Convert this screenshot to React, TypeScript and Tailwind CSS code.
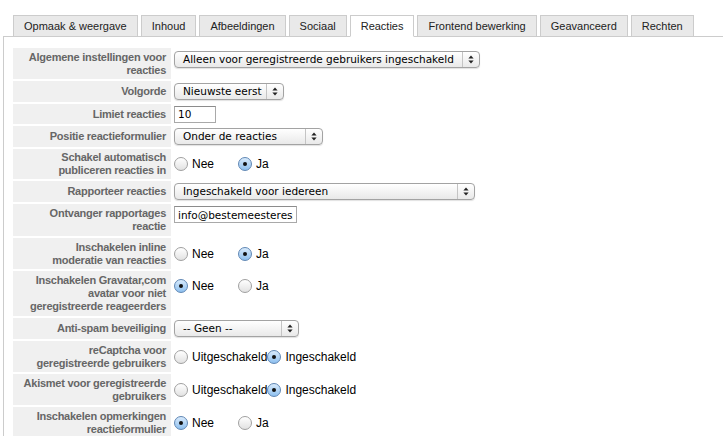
import React from "react";

const tabs = [
    "Opmaak & weergave",
    "Inhoud",
    "Afbeeldingen",
    "Sociaal",
    "Reacties",
    "Frontend bewerking",
    "Geavanceerd",
    "Rechten",
];

const Arrows = () => (
    <svg width="6" height="9" viewBox="0 0 6 9" className="block">
        <path d="M3 0.5 L5.6 3.6 L0.4 3.6 Z" fill="#222" />
        <path d="M3 8.5 L5.6 5.4 L0.4 5.4 Z" fill="#222" />
    </svg>
);

const Select = ({ value, width }: { value: string; width: string }) => (
    <div
        className={`${width} h-[17px] flex items-center rounded-[4px] border border-[#a3a3a3] bg-gradient-to-b from-white to-[#e9e9e9] shadow-[0_1px_1px_rgba(0,0,0,0.12)] font-['DejaVu_Sans',sans-serif] text-[10.5px] text-black`}
    >
        <span className="flex-1 pl-[8px] whitespace-nowrap overflow-hidden leading-[15px]">{value}</span>
        <span className="h-full w-[17px] border-l border-[#c4c4c4] flex items-center justify-center">
            <Arrows />
        </span>
    </div>
);

const Radio = ({ checked, label }: { checked?: boolean; label: string }) => (
    <label className="min-w-[64px] flex items-center gap-[4px] whitespace-nowrap">
        <span
            className={
                checked
                    ? "w-[14px] h-[14px] rounded-full border border-[#5f87b5] bg-gradient-to-b from-[#d8eafb] to-[#8ec0ef] flex items-center justify-center shrink-0"
                    : "w-[14px] h-[14px] rounded-full border border-[#a0a0a0] bg-gradient-to-b from-white to-[#e2e2e2] shrink-0"
            }
        >
            {checked && <span className="w-[4px] h-[4px] rounded-full bg-[#111]" />}
        </span>
        <span className="text-[12px] text-black leading-[20px]">{label}</span>
    </label>
);

const Row = ({
    label,
    h,
    align = "items-center",
    children,
}: {
    label: React.ReactNode;
    h: string;
    align?: string;
    children: React.ReactNode;
}) => (
    <div className={`flex gap-[3px] ${h}`}>
        <div className="w-[158px] shrink-0 bg-[#f0f0f0] flex items-center justify-end text-right pr-[5px] whitespace-nowrap text-[11px] font-bold leading-[13px] tracking-[-0.25px] text-[#666]">
            <span>{label}</span>
        </div>
        <div className={`flex-1 flex ${align}`}>{children}</div>
    </div>
);

const Input = ({ value, width }: { value: string; width: string }) => (
    <input
        readOnly
        defaultValue={value}
        className={`${width} h-[17px] border border-[#a9a9a9] border-t-[#8c8c8c] bg-white px-[3px] font-['DejaVu_Sans',sans-serif] text-[10.5px] text-black outline-none`}
    />
);

export default function App() {
    return (
        <div className="w-[723px] h-[436px] overflow-hidden bg-white pl-[3px] pt-[15px] font-['Liberation_Sans',Arial,sans-serif]">
            <div className="flex gap-[3px] ml-[10px] relative z-10">
                {tabs.map((t) => (
                    <div
                        key={t}
                        className={
                            t === "Reacties"
                                ? "h-[22px] -mb-px px-[10px] border border-[#cccccc] border-b-white bg-white text-[11px] text-[#222] flex items-center"
                                : "h-[21px] px-[10px] border border-[#cccccc] border-b-0 bg-[#e9e9e9] text-[11px] text-[#222] flex items-center"
                        }
                    >
                        {t}
                    </div>
                ))}
            </div>
            <div className="border-l border-t border-[#cccccc] pl-[9px] pt-[11px] flex flex-col gap-[2px]">
                <Row label={<>Algemene instellingen voor<br />reacties</>} h="h-[31px]" align="items-start pt-[3px]">
                    <Select value="Alleen voor geregistreerde gebruikers ingeschakeld" width="w-[306px]" />
                </Row>
                <Row label="Volgorde" h="h-[21px]">
                    <Select value="Nieuwste eerst" width="w-[110px]" />
                </Row>
                <Row label="Limiet reacties" h="h-[20px]">
                    <Input value="10" width="w-[42px]" />
                </Row>
                <Row label="Positie reactieformulier" h="h-[21px]">
                    <Select value="Onder de reacties" width="w-[149px]" />
                </Row>
                <Row label={<>Schakel automatisch<br />publiceren reacties in</>} h="h-[30px]">
                    <Radio label="Nee" />
                    <Radio label="Ja" checked />
                </Row>
                <Row label="Rapporteer reacties" h="h-[21px]">
                    <Select value="Ingeschakeld voor iedereen" width="w-[301px]" />
                </Row>
                <Row label={<>Ontvanger rapportages<br />reactie</>} h="h-[32px]" align="items-start pt-[2px]">
                    <Input value="info@bestemeesteress" width="w-[123px]" />
                </Row>
                <Row label={<>Inschakelen inline<br />moderatie van reacties</>} h="h-[31px]">
                    <Radio label="Nee" />
                    <Radio label="Ja" checked />
                </Row>
                <Row
                    label={<>Inschakelen Gravatar,com<br />avatar voor niet<br />geregistreerde reageerders</>}
                    h="h-[45px]"
                    align="items-start pt-[5px]"
                >
                    <Radio label="Nee" checked />
                    <Radio label="Ja" />
                </Row>
                <Row label="Anti-spam beveiliging" h="h-[21px]">
                    <Select value="-- Geen --" width="w-[125px]" />
                </Row>
                <Row label={<>reCaptcha voor<br />geregistreerde gebruikers</>} h="h-[31px]">
                    <Radio label="Uitgeschakeld" />
                    <Radio label="Ingeschakeld" checked />
                </Row>
                <Row label={<>Akismet voor geregistreerde<br />gebruikers</>} h="h-[31px]">
                    <Radio label="Uitgeschakeld" />
                    <Radio label="Ingeschakeld" checked />
                </Row>
                <Row label={<>Inschakelen opmerkingen<br />reactieformulier</>} h="h-[31px]">
                    <Radio label="Nee" checked />
                    <Radio label="Ja" />
                </Row>
            </div>
        </div>
    );
}
